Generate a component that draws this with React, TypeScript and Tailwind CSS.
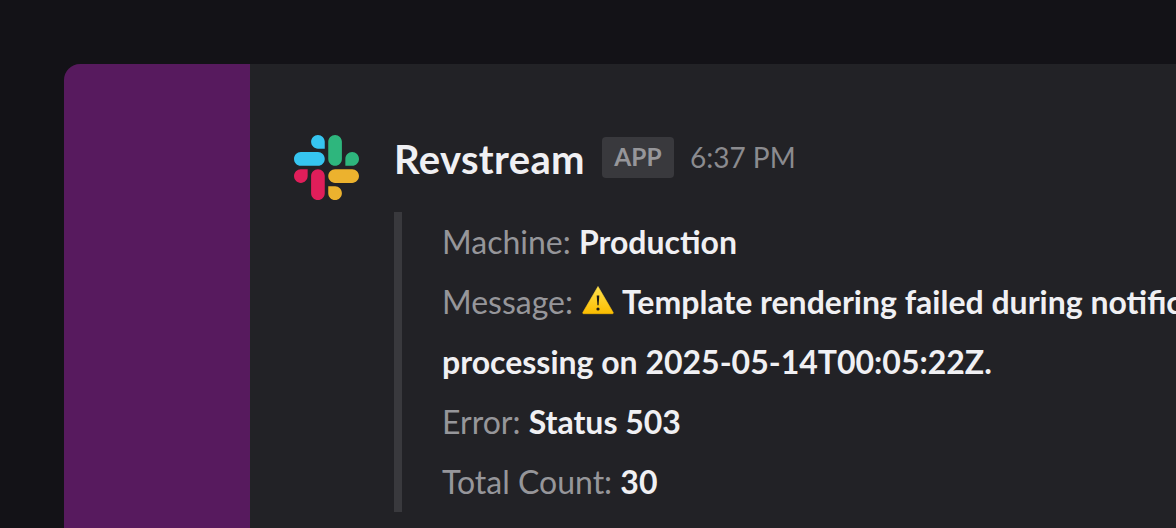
function SlackLogo() {
  return (
    <svg viewBox="0 0 122.8 122.8" className="h-[65px] w-[65px] shrink-0">
      <path d="M25.8 77.6c0 7.1-5.8 12.9-12.9 12.9S0 84.7 0 77.6s5.8-12.9 12.9-12.9h12.9v12.9zm6.5 0c0-7.1 5.8-12.9 12.9-12.9s12.9 5.8 12.9 12.9v32.3c0 7.1-5.8 12.9-12.9 12.9s-12.9-5.8-12.9-12.9V77.6z" fill="#e01e5a" />
      <path d="M45.2 25.8c-7.1 0-12.9-5.8-12.9-12.9S38.1 0 45.2 0s12.9 5.8 12.9 12.9v12.9H45.2zm0 6.5c7.1 0 12.9 5.8 12.9 12.9s-5.8 12.9-12.9 12.9H12.9C5.8 58.1 0 52.3 0 45.2s5.8-12.9 12.9-12.9h32.3z" fill="#36c5f0" />
      <path d="M97 45.2c0-7.1 5.8-12.9 12.9-12.9s12.9 5.8 12.9 12.9-5.8 12.9-12.9 12.9H97V45.2zm-6.5 0c0 7.1-5.8 12.9-12.9 12.9s-12.9-5.8-12.9-12.9V12.9C64.7 5.8 70.5 0 77.6 0s12.9 5.8 12.9 12.9v32.3z" fill="#2eb67d" />
      <path d="M77.6 97c7.1 0 12.9 5.8 12.9 12.9s-5.8 12.9-12.9 12.9-12.9-5.8-12.9-12.9V97h12.9zm0-6.5c-7.1 0-12.9-5.8-12.9-12.9s5.8-12.9 12.9-12.9h32.3c7.1 0 12.9 5.8 12.9 12.9s-5.8 12.9-12.9 12.9H77.6z" fill="#ecb22e" />
    </svg>
  );
}

function WarningIcon() {
  return (
    <svg viewBox="0 0 32 30" className="ml-[0.500px] mr-[1.500px] inline-block h-[30px] w-[32px] align-[-1px]">
      <defs>
        <linearGradient id="warn" x1="0" y1="0" x2="0" y2="1">
          <stop offset="0" stopColor="#ffe14d" />
          <stop offset="1" stopColor="#fbbd00" />
        </linearGradient>
      </defs>
      <path d="M16 1.500 31.200 27.500a.8.8 0 0 1-.7 1.200H1.500a.8.8 0 0 1-.7-1.200z" fill="url(#warn)" stroke="url(#warn)" strokeWidth="0.600" strokeLinejoin="round" />
      <path d="M14.700 10.500h2.600l-.7 9.800h-1.200z" fill="#1c1a17" />
      <circle cx="16" cy="24" r="1.600" fill="#1c1a17" />
    </svg>
  );
}

function Field({ label, children }: { label: string; children: React.ReactNode }) {
  return (
    <div className="whitespace-nowrap">
      <span className="text-[#96969a]">{label}</span>{" "}
      <span className="font-bold text-[#f0f0f3]">{children}</span>
    </div>
  );
}

export default function App() {
  return (
    <div className="h-[528px] w-[1176px] overflow-hidden bg-[#131217] pl-[64px] pt-[64px] font-['Lato',sans-serif]">
      <div className="flex h-[464px] overflow-hidden rounded-tl-[16px]">
        <div className="w-[186px] shrink-0 bg-[#571a5e]" />
        <div className="flex flex-1 gap-[35px] bg-[#222226] pl-[44px] pt-[71px]">
          <SlackLogo />
          <div className="min-w-0 flex-1">
            <div className="-mt-[4px] flex h-[52px] items-center">
              <span className="mt-[3px] text-[40px] font-bold tracking-[0.35px] text-[#f0f0f3] [font-variant-ligatures:none]">Revstream</span>
              <span className="ml-[17px] mt-[1px] flex h-[41px] w-[72px] items-center justify-center rounded-[4px] bg-[#39393d] text-[24.500px] font-bold text-[#96969a]">
                APP
              </span>
              <span className="ml-[16px] text-[28px] text-[#8b8b8f]">6:37 PM</span>
            </div>
            <div className="mt-[29px] h-[300px] border-l-[8px] border-[#39393d] pl-[40px] text-[32px] leading-[60px]">
              <Field label="Machine:">Production</Field>
              <Field label="Message:">
                <WarningIcon /> Template rendering failed during notification
                <br />
                processing on 2025-05-14T00:05:22Z.
              </Field>
              <Field label="Error:">Status 503</Field>
              <Field label="Total Count:">30</Field>
            </div>
          </div>
        </div>
      </div>
    </div>
  );
}
